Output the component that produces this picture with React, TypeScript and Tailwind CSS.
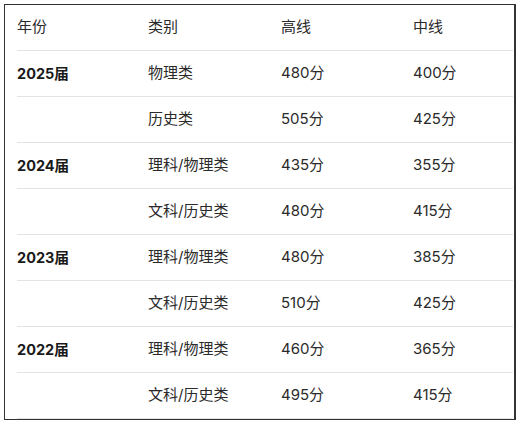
import React from "react";

const rows: { year: string; cat: string; high: string; mid: string }[] = [
  { year: "2025届", cat: "物理类", high: "480分", mid: "400分" },
  { year: "", cat: "历史类", high: "505分", mid: "425分" },
  { year: "2024届", cat: "理科/物理类", high: "435分", mid: "355分" },
  { year: "", cat: "文科/历史类", high: "480分", mid: "415分" },
  { year: "2023届", cat: "理科/物理类", high: "480分", mid: "385分" },
  { year: "", cat: "文科/历史类", high: "510分", mid: "425分" },
  { year: "2022届", cat: "理科/物理类", high: "460分", mid: "365分" },
  { year: "", cat: "文科/历史类", high: "495分", mid: "415分" },
];

const font = { fontFamily: 'Inter, "Noto Sans CJK SC", sans-serif' };

export default function App() {
  return (
    <div className="w-[519px] h-[425px] bg-white pt-[4px] pl-[4px]" style={font}>
      <div className="w-[512px] h-[416px] border border-[#333333] border-r-2 border-b-[1px] pl-[12px] pr-[1px] overflow-hidden">
        <div className="w-[496px]">
          <div className="grid grid-cols-[131px_133px_132px_100px] h-[46px] items-center border-b border-[#e3e3e3] text-[15px] text-[#2a2a2a] pb-[1px]">
            <div>年份</div>
            <div>类别</div>
            <div>高线</div>
            <div>中线</div>
          </div>
          {rows.map((r, i) => (
            <div
              key={i}
              className="grid grid-cols-[131px_133px_132px_100px] h-[46px] items-center border-b border-[#e3e3e3] text-[15px] text-[#2a2a2a]"
            >
              <div className="font-bold text-[14.5px] text-[#1a1a1a]">{r.year}</div>
              <div>{r.cat}</div>
              <div>{r.high}</div>
              <div>{r.mid}</div>
            </div>
          ))}
        </div>
      </div>
    </div>
  );
}
